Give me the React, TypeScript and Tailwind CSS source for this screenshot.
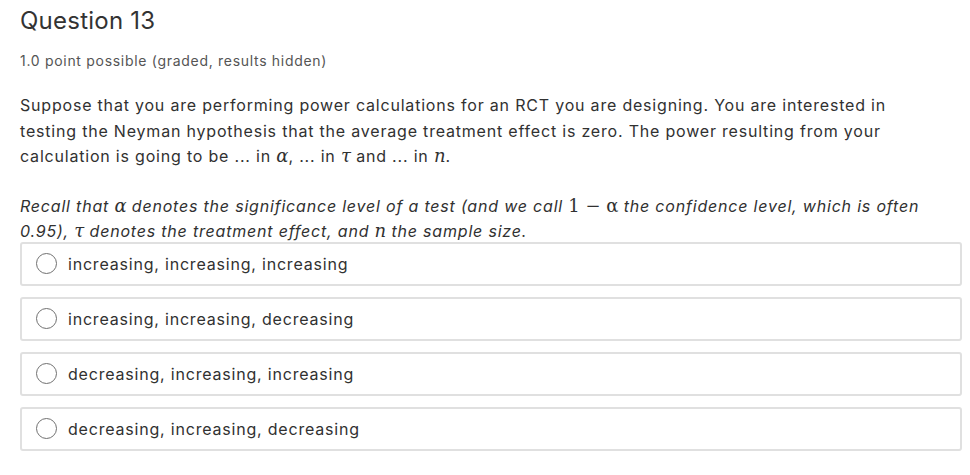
import React from "react";

const options = [
  "increasing, increasing, increasing",
  "increasing, increasing, decreasing",
  "decreasing, increasing, increasing",
  "decreasing, increasing, decreasing",
];

const M: React.FC<{ children: React.ReactNode; upright?: boolean }> = ({ children, upright }) => (
  <span
    className={`text-[18px] leading-none tracking-normal ${upright ? "not-italic" : "italic"}`}
    style={{ fontFamily: '"DejaVu Serif", "Liberation Serif", serif' }}
  >
    {children}
  </span>
);

export default function App() {
  return (
    <div
      className="bg-white min-h-[475px] pl-[20px] pr-[8px] text-[#313131]"
      style={{ fontFamily: 'Inter, "Noto Sans", sans-serif' }}
    >
      {/* Header */}
      <h2 className="pt-[6px] text-[24px] leading-[30px] tracking-[0.01em] text-[#333] font-normal">
        Question 13
      </h2>
      <p className="mt-[15px] text-[14px] leading-[20px] tracking-[0.05em] text-[#555]">
        1.0 point possible (graded, results hidden)
      </p>

      {/* Prompt */}
      <p className="mt-[22px] w-[905px] text-[16px] leading-[25.5px] tracking-[0.05em]">
        Suppose that you are performing power calculations for an RCT you are designing. You are
        interested in testing the Neyman hypothesis that the average treatment effect is zero. The
        power resulting from your calculation is going to be ... in <M>α</M>, ... in <M>τ</M> and
        ... in <M>n</M>.
      </p>

      <p className="mt-[24px] w-[935px] text-[16px] leading-[25.5px] tracking-[0.05em] italic">
        Recall that <M>α</M> denotes the significance level of a test (and we call{" "}
        <M upright>1 − α</M> the confidence level, which is often 0.95), <M>τ</M> denotes the
        treatment effect, and <M>n</M> the sample size.
      </p>

      {/* Choices */}
      <div className="-mt-[3px] flex flex-col gap-[11px]">
        {options.map((opt) => (
          <label
            key={opt}
            className="flex items-center h-[44px] border-2 border-[#e0e0e0] rounded-[3px] pl-[14px]"
          >
            <span className="w-[21px] h-[21px] rounded-full border border-[#707070] bg-white shrink-0" />
            <span className="ml-[11px] text-[16px] tracking-[0.05em]">{opt}</span>
          </label>
        ))}
      </div>
    </div>
  );
}
